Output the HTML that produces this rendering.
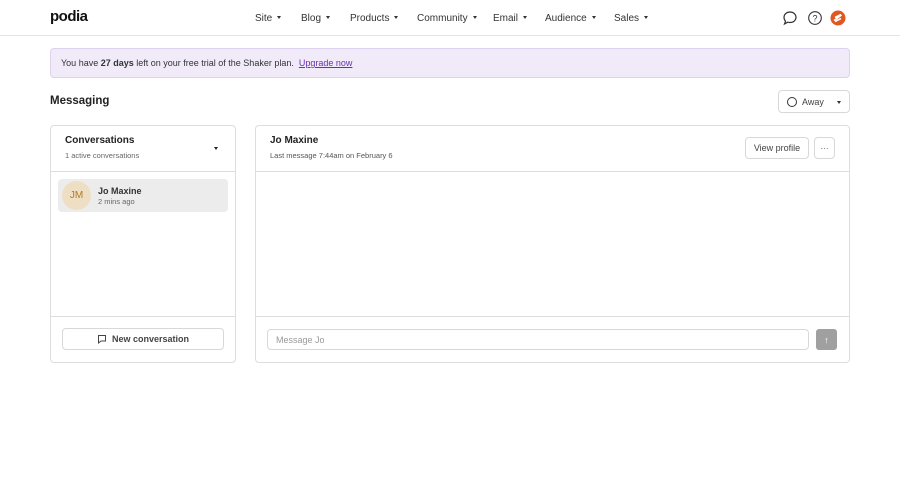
<!DOCTYPE html><html><head><style>
*{box-sizing:border-box;margin:0;padding:0}
body{width:900px;height:484px;background:#fff;font-family:"Liberation Sans",sans-serif;color:#222;position:relative;overflow:hidden}
.abs{position:absolute}
.nav{height:36px;border-bottom:1px solid #e4e4e4}
.nav span{position:absolute;top:12px;font-size:10px;color:#333}
.nav span:after{content:"";display:inline-block;margin-left:5px;border:2.5px solid transparent;border-top:3px solid #333;vertical-align:0px}
.box{border:1px solid #ddd;border-radius:4px;background:#fff}
.btn{border:1px solid #d8d8d8;border-radius:4px;background:#fff;font-size:9px;color:#444;display:flex;align-items:center;justify-content:center}
</style></head><body>
<div class="nav abs" style="left:0;top:0;width:900px"></div>
<div class="abs" style="left:50px;top:8px;font-size:15px;font-weight:bold;letter-spacing:-0.5px;color:#111">podia</div>
<div class="nav" style="position:absolute;top:1px;left:0;width:900px;border:none">
<span style="left:255px">Site</span><span style="left:301px">Blog</span><span style="left:350px">Products</span><span style="left:417px">Community</span><span style="left:493px">Email</span><span style="left:545px">Audience</span><span style="left:614px">Sales</span></div>
<svg class="abs" style="left:782px;top:10px" width="16" height="16" viewBox="0 0 16 16"><path d="M8 2c3.5 0 6 2.3 6 5.3S11.5 12.5 8 12.5c-.8 0-1.5-.1-2.2-.3L2.5 14l1-2.8C2.5 10.2 2 8.9 2 7.3 2 4.3 4.5 2 8 2z" fill="none" stroke="#333" stroke-width="1.2"/></svg>
<svg class="abs" style="left:807px;top:10px" width="16" height="16" viewBox="0 0 16 16"><circle cx="8" cy="8" r="6.3" fill="none" stroke="#333" stroke-width="1.1"/><text x="8" y="11.3" font-size="9" text-anchor="middle" fill="#333" font-family="Liberation Sans">?</text></svg>
<svg class="abs" style="left:830px;top:10px" width="16" height="16" viewBox="0 0 16 16"><circle cx="8" cy="8" r="7.5" fill="#e0571f"/><path d="M4 10.5L11.5 5M5 7.5l6-3M5 11.5l6-3" stroke="#fff" stroke-width="1.6"/></svg>
<div class="abs" style="left:50px;top:48px;width:800px;height:30px;background:#f1ebf9;border:1px solid #ddd2ee;border-radius:4px;font-size:9px;padding:9px 10px;color:#333">You have <b>27 days</b> left on your free trial of the Shaker plan. &nbsp;<span style="color:#6a2fb0;text-decoration:underline">Upgrade now</span></div>
<div class="abs" style="left:50px;top:95px;font-size:11.5px;font-weight:bold">Messaging</div>
<div class="abs btn" style="left:778px;top:90px;width:72px;height:23px;justify-content:flex-start;padding-left:8px"><span style="width:10px;height:10px;border:1px solid #333;border-radius:50%;margin-right:5px"></span>Away<span style="margin-left:13px;border:2.5px solid transparent;border-top:3px solid #333;margin-top:3px"></span></div>
<div class="abs box" style="left:50px;top:125px;width:186px;height:238px"></div>
<div class="abs" style="left:51px;top:171px;width:184px;border-top:1px solid #ddd"></div>
<div class="abs" style="left:51px;top:316px;width:184px;border-top:1px solid #ddd"></div>
<div class="abs" style="left:65px;top:135px;font-size:10px;font-weight:bold">Conversations</div>
<div class="abs" style="left:65px;top:151px;font-size:7.5px;color:#666">1 active conversations</div>
<div class="abs" style="left:214px;top:147px;border:2.5px solid transparent;border-top:3.5px solid #222"></div>
<div class="abs" style="left:58px;top:179px;width:170px;height:33px;background:#ececec;border-radius:4px"></div>
<div class="abs" style="left:62px;top:181px;width:29px;height:29px;border-radius:50%;background:#eedfc4;color:#b07b2a;font-size:10px;display:flex;align-items:center;justify-content:center">JM</div>
<div class="abs" style="left:98px;top:186px;font-size:9px;font-weight:bold;color:#333">Jo Maxine</div>
<div class="abs" style="left:98px;top:197px;font-size:7.5px;color:#666">2 mins ago</div>
<div class="abs btn" style="left:62px;top:328px;width:162px;height:22px;font-weight:bold"><svg width="10" height="10" viewBox="0 0 10 10" style="margin-right:5px"><path d="M1.5 1.5h7v5.5h-4.5l-2.5 2v-2h0V1.5z" fill="none" stroke="#444" stroke-width="1"/></svg>New conversation</div>
<div class="abs box" style="left:255px;top:125px;width:595px;height:238px"></div>
<div class="abs" style="left:256px;top:171px;width:593px;border-top:1px solid #ddd"></div>
<div class="abs" style="left:256px;top:316px;width:593px;border-top:1px solid #ddd"></div>
<div class="abs" style="left:270px;top:135px;font-size:10px;font-weight:bold">Jo Maxine</div>
<div class="abs" style="left:270px;top:151px;font-size:7.5px;color:#555">Last message 7:44am on February 6</div>
<div class="abs btn" style="left:745px;top:137px;width:64px;height:22px">View profile</div>
<div class="abs btn" style="left:814px;top:137px;width:21px;height:22px;font-size:8px">···</div>
<div class="abs box" style="left:267px;top:329px;width:542px;height:21px;font-size:9px;color:#999;padding:5px 8px;border-color:#d8d8d8">Message Jo</div>
<div class="abs" style="left:816px;top:329px;width:21px;height:21px;background:#a0a0a0;border-radius:3px;color:#fff;font-size:9px;display:flex;align-items:center;justify-content:center">↑</div>
</body></html>
